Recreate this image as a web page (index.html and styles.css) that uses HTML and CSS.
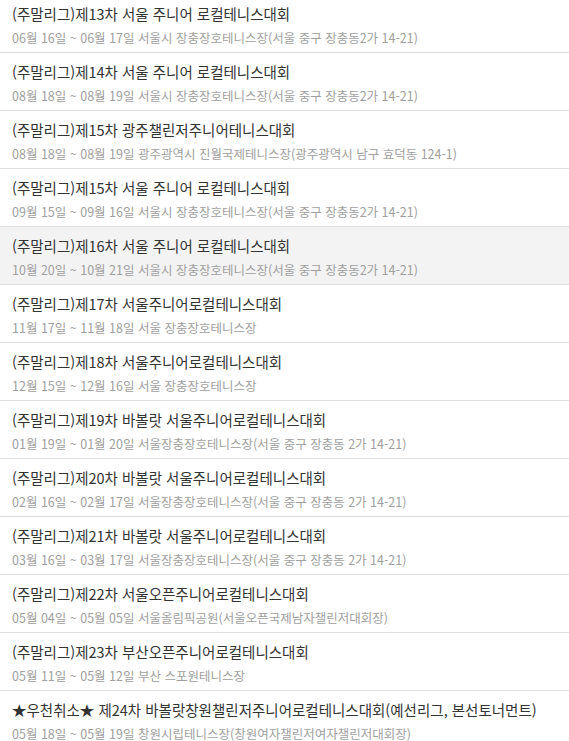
FILE: index.html
```html
<!DOCTYPE html>
<html lang="ko">
<head>
<meta charset="utf-8">
<title>대회 목록</title>
<link rel="stylesheet" href="styles.css">
</head>
<body>
<ul class="list">
  <li class="item"><div class="title">(주말리그)제13차 서울 주니어 로컬테니스대회</div><div class="sub">06월 16일 ~ 06월 17일 서울시 장충장호테니스장(서울 중구 장충동2가 14-21)</div></li>
  <li class="item"><div class="title">(주말리그)제14차 서울 주니어 로컬테니스대회</div><div class="sub">08월 18일 ~ 08월 19일 서울시 장충장호테니스장(서울 중구 장충동2가 14-21)</div></li>
  <li class="item"><div class="title">(주말리그)제15차 광주챌린저주니어테니스대회</div><div class="sub">08월 18일 ~ 08월 19일 광주광역시 진월국제테니스장(광주광역시 남구 효덕동 124-1)</div></li>
  <li class="item"><div class="title">(주말리그)제15차 서울 주니어 로컬테니스대회</div><div class="sub">09월 15일 ~ 09월 16일 서울시 장충장호테니스장(서울 중구 장충동2가 14-21)</div></li>
  <li class="item item-active"><div class="title">(주말리그)제16차 서울 주니어 로컬테니스대회</div><div class="sub">10월 20일 ~ 10월 21일 서울시 장충장호테니스장(서울 중구 장충동2가 14-21)</div></li>
  <li class="item"><div class="title">(주말리그)제17차 서울주니어로컬테니스대회</div><div class="sub">11월 17일 ~ 11월 18일 서울 장충장호테니스장</div></li>
  <li class="item"><div class="title">(주말리그)제18차 서울주니어로컬테니스대회</div><div class="sub">12월 15일 ~ 12월 16일 서울 장충장호테니스장</div></li>
  <li class="item"><div class="title">(주말리그)제19차 바볼랏 서울주니어로컬테니스대회</div><div class="sub">01월 19일 ~ 01월 20일 서울장충장호테니스장(서울 중구 장충동 2가 14-21)</div></li>
  <li class="item"><div class="title">(주말리그)제20차 바볼랏 서울주니어로컬테니스대회</div><div class="sub">02월 16일 ~ 02월 17일 서울장충장호테니스장(서울 중구 장충동 2가 14-21)</div></li>
  <li class="item"><div class="title">(주말리그)제21차 바볼랏 서울주니어로컬테니스대회</div><div class="sub">03월 16일 ~ 03월 17일 서울장충장호테니스장(서울 중구 장충동 2가 14-21)</div></li>
  <li class="item"><div class="title">(주말리그)제22차 서울오픈주니어로컬테니스대회</div><div class="sub">05월 04일 ~ 05월 05일 서울올림픽공원(서울오픈국제남자챌린저대회장)</div></li>
  <li class="item"><div class="title">(주말리그)제23차 부산오픈주니어로컬테니스대회</div><div class="sub">05월 11일 ~ 05월 12일 부산 스포원테니스장</div></li>
  <li class="item"><div class="title">★우천취소★ 제24차 바볼랏창원챌린저주니어로컬테니스대회(예선리그, 본선토너먼트)</div><div class="sub">05월 18일 ~ 05월 19일 창원시립테니스장(창원여자챌린저여자챌린저대회장)</div></li>
</ul>
</body>
</html>
```
FILE: styles.css
```css
html, body {
  margin: 0;
  padding: 0;
  background: #fff;
}
body {
  font-family: "Malgun Gothic", "Noto Sans CJK KR", "Noto Sans", sans-serif;
  overflow: hidden;
}
.list {
  list-style: none;
  margin: -5px 0 0 0;
  padding: 0;
}
.item {
  padding: 9px 12px 5px;
  border-bottom: 1px solid #dedede;
  white-space: nowrap;
}
.item-active {
  background: #f3f3f3;
}
.title {
  font-size: 14.5px;
  line-height: 20px;
  color: #333;
}
.sub {
  margin-top: 5px;
  font-size: 12.5px;
  line-height: 18px;
  color: #a0a0a0;
}
```
